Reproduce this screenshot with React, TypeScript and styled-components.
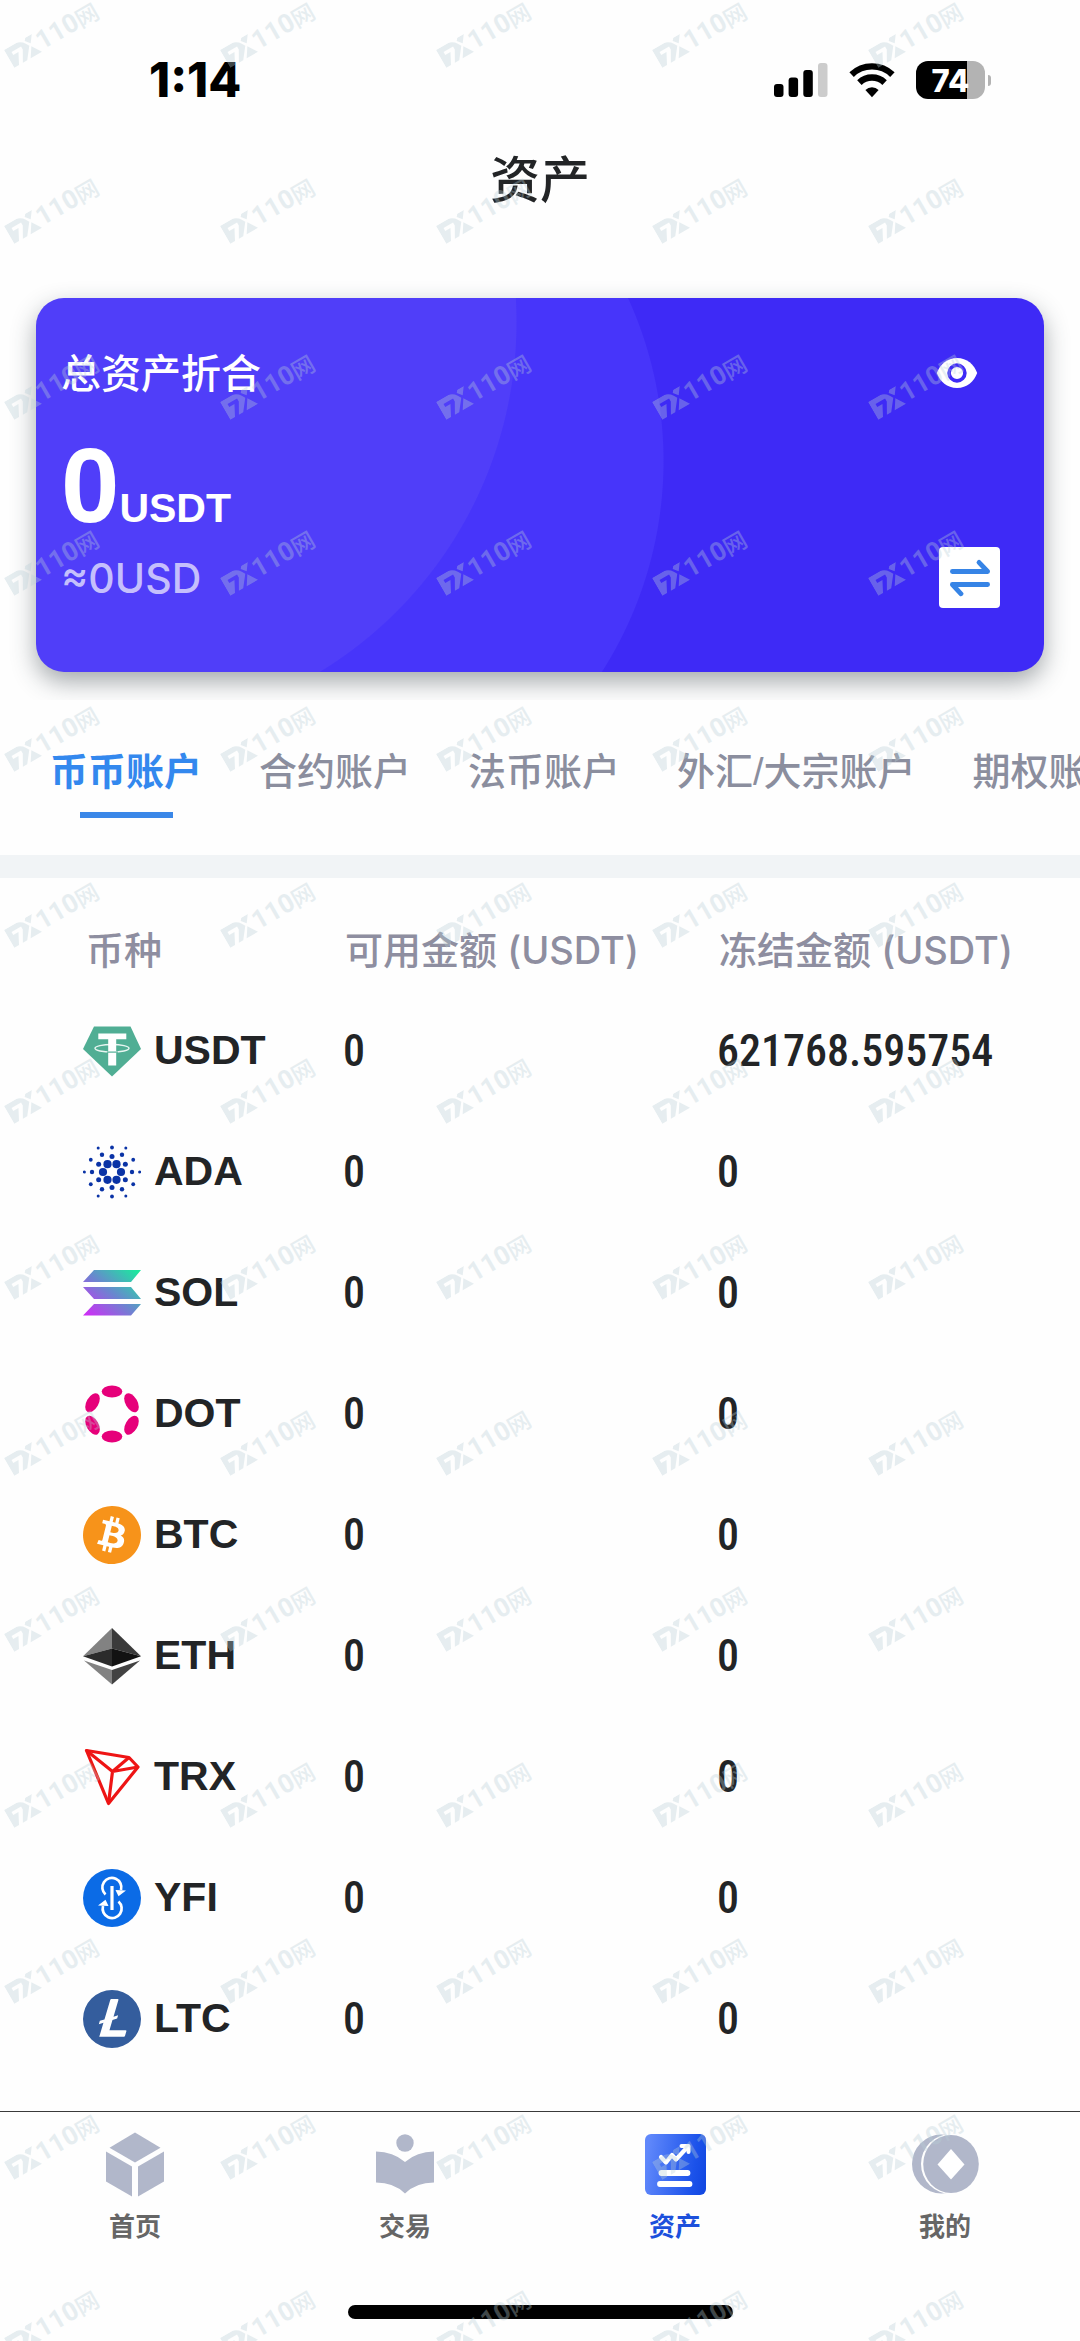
import React from "react";
import styled, { createGlobalStyle } from "styled-components";
import { SiBitcoin, SiLitecoin } from "react-icons/si";

const GlobalStyle = createGlobalStyle`
  *, *::before, *::after { box-sizing: border-box; }
  html, body { margin: 0; padding: 0; background: #fefefe; }
  body {
    font-family: Inter, "Noto Sans CJK SC", sans-serif;
    color: #222426;
    -webkit-font-smoothing: antialiased;
  }
  button { font: inherit; color: inherit; border: 0; padding: 0; background: none; cursor: pointer; }
`;

const Screen = styled.div`
  position: relative;
  display: flex;
  flex-direction: column;
  min-height: 100vh;
  overflow: hidden;
  background: #fefefe;
`;

const StatusBar = styled.header`
  display: flex;
  align-items: center;
  justify-content: space-between;
  padding: 60px 89px 0 149px;
`;

const Time = styled.time`
  font-size: 48px;
  font-weight: 800;
  line-height: 40px;
  color: #000;
`;

const StatusIcons = styled.div`
  display: flex;
  align-items: center;
  gap: 21px;
`;

const Battery = styled.div`
  display: flex;
  align-items: center;
  gap: 3px;
`;

const BatteryLevel = styled.span`
  display: flex;
  align-items: center;
  justify-content: center;
  width: 69px;
  height: 38px;
  border-radius: 12px;
  background: linear-gradient(to right, #000 74%, #b3b3b3 74%);
  color: #fff;
  font-size: 31px;
  font-weight: 800;
`;

const BatteryTip = styled.span`
  width: 3px;
  height: 11px;
  border-radius: 0 3px 3px 0;
  background: #b3b3b3;
`;

const Title = styled.h1`
  margin: 0;
  padding: 44px 0 82px;
  font-size: 50px;
  line-height: 72px;
  font-weight: 500;
  text-align: center;
`;

const Card = styled.section`
  display: flex;
  justify-content: space-between;
  margin: 0 36px;
  padding: 50px 41px 64px 25px;
  height: 374px;
  border-radius: 28px;
  color: #fff;
  background:
    radial-gradient(circle 410px at 71px 24px, #503ef9 409px, transparent 410px),
    radial-gradient(circle 392px at 236px 163px, #4735fa 391px, transparent 392px),
    #3e2af6;
  box-shadow: 0 10px 24px rgba(40, 52, 60, 0.42);
`;

const Balance = styled.div`
  display: flex;
  flex-direction: column;
`;

const BalanceLabel = styled.span`
  font-size: 40px;
  line-height: 52px;
  font-weight: 500;
`;

const Amount = styled.p`
  display: flex;
  align-items: baseline;
  margin: 32px 0 0;
  font-family: "Liberation Sans", Arial, sans-serif;
  font-size: 105px;
  line-height: 108px;
  font-weight: 700;
`;

const Unit = styled.span`
  font-size: 41px;
  line-height: 42px;
`;

const Approx = styled.span`
  margin-top: 12px;
  font-size: 41px;
  line-height: 52px;
  font-weight: 500;
  color: #c5bffc;
`;

const CardActions = styled.div`
  display: flex;
  flex-direction: column;
  align-items: center;
  justify-content: space-between;
`;

const EyeButton = styled.button`
  display: flex;
  margin-top: 10px;
  margin-right: 25px;
`;

const SwapButton = styled.button`
  display: flex;
  align-items: center;
  justify-content: center;
  width: 61px;
  height: 61px;
  border-radius: 4px;
  background: #fff;
`;

const Tabs = styled.nav`
  position: relative;
  display: flex;
  gap: 57px;
  margin-top: 28px;
  padding: 44px 0 37px 50px;
  overflow: hidden;
  background: #fefefe;
`;

const Tab = styled.button<{ $active?: boolean }>`
  display: flex;
  flex: none;
  flex-direction: column;
  align-items: center;
  gap: 12px;
  font-family: "Liberation Sans", "Noto Sans CJK SC", sans-serif;
  font-size: 38px;
  line-height: 56px;
  font-weight: ${(p) => (p.$active ? 700 : 500)};
  color: ${(p) => (p.$active ? "#3388ee" : "#8b8e9e")};

  &::after {
    content: "";
    width: 93px;
    height: 6px;
    background: ${(p) => (p.$active ? "#3a87e8" : "transparent")};
  }
`;

const Divider = styled.div`
  height: 23px;
  background: #f1f4f6;
`;

const ListArea = styled.main`
  flex: 1;
`;

const CoinTable = styled.table`
  width: 100%;
  border-collapse: collapse;
  table-layout: fixed;
`;

const NameCol = styled.col`
  width: 343px;
`;

const AvailableCol = styled.col`
  width: 374px;
`;

const Heading = styled.th<{ $first?: boolean }>`
  height: 112px;
  padding: 32px 0 0 ${(p) => (p.$first ? "86px" : "2px")};
  font-size: 38px;
  line-height: 52px;
  font-weight: 500;
  text-align: left;
  white-space: nowrap;
  color: #8e8ea0;
`;

const CoinCell = styled.th`
  height: 121px;
  padding: 0 0 0 83px;
  text-align: left;
`;

const Coin = styled.div`
  display: flex;
  align-items: center;
  gap: 13px;
  font-family: "Liberation Sans", Arial, sans-serif;
  font-size: 41px;
  font-weight: 700;

  svg { flex: none; }
`;

const Value = styled.td`
  padding: 0;
  font-family: "Liberation Sans Narrow", "Roboto Condensed", Roboto, sans-serif;
  font-size: 44px;
  font-weight: 500;
`;

const TabBar = styled.footer`
  border-top: 1px solid #3a3a3a;
  background: #fefefe;
`;

const TabBarItems = styled.nav`
  display: grid;
  grid-template-columns: repeat(4, 1fr);
`;

const TabBarItem = styled.a<{ $active?: boolean }>`
  display: flex;
  flex-direction: column;
  align-items: center;
  gap: 8px;
  padding-top: 19px;
  font-size: 26px;
  line-height: 40px;
  font-weight: 700;
  text-decoration: none;
  color: ${(p) => (p.$active ? "#1c50dc" : "#666")};
`;

const HomeIndicator = styled.div`
  width: 385px;
  height: 14px;
  margin: 58px auto 22px;
  border-radius: 7px;
  background: #000;
`;

const WatermarkLayer = styled.div`
  position: absolute;
  inset: 0;
  display: grid;
  grid-template-columns: repeat(auto-fill, 216px);
  grid-auto-rows: 176px;
  overflow: hidden;
  pointer-events: none;
  color: rgb(185, 207, 215);
  opacity: 0.34;
`;

const WatermarkCell = styled.div`
  padding: 50px 0 0 4px;
`;

const Mark = styled.div`
  display: flex;
  align-items: center;
  width: 110px;
  height: 21px;
  transform: rotate(-30deg);
  transform-origin: top left;
  font-family: Roboto, sans-serif;
  font-size: 26px;
  line-height: 21px;
  font-weight: 700;

  svg { flex: none; }
`;

const MarkSuffix = styled.span`
  font-family: "Noto Sans CJK SC", sans-serif;
  font-size: 23px;
  font-weight: 500;
`;

const SignalIcon = () => (
  <svg width="54" height="36" viewBox="0 0 54 36" aria-hidden="true">
    <rect x="0" y="22" width="9.5" height="13" rx="3" />
    <rect x="14.6" y="15.5" width="9.5" height="19.5" rx="3" />
    <rect x="29.3" y="8" width="9.5" height="27" rx="3" />
    <rect x="44" y="1" width="9.5" height="34" rx="3" fill="#ccc" />
  </svg>
);

const WifiIcon = () => (
  <svg width="46" height="36" viewBox="0 0 46 36" aria-hidden="true">
    <g fill="none" stroke="#000" strokeWidth="6.4">
      <path d="M2.6 12.6A29.5 29.5 0 0 1 43.4 12.6" />
      <path d="M10.4 20.6A18.2 18.2 0 0 1 35.6 20.6" />
    </g>
    <path d="M23 35.2l-6.6-7.2a9.6 9.6 0 0 1 13.2 0z" />
  </svg>
);

const EyeIcon = () => (
  <svg width="42" height="30" viewBox="0 0 42 30" aria-hidden="true">
    <path d="M21 0C11 0 4 6.5.8 15 4 23.5 11 30 21 30s17-6.5 20.2-15C38 6.5 31 0 21 0z" fill="#fff" />
    <circle cx="21" cy="15" r="7.9" fill="#fff" stroke="#3e2af6" strokeWidth="3.6" />
  </svg>
);

const SwapIcon = () => (
  <svg width="42" height="38" viewBox="0 0 42 38" fill="none" stroke="#3684e6" strokeWidth="4.8" strokeLinecap="round" strokeLinejoin="round" aria-hidden="true">
    <path d="M3.400 12.500H38.600L30 3.400" />
    <path d="M38.600 25.500H3.400L12 34.800" />
  </svg>
);

const UsdtIcon = () => (
  <svg width="58" height="58" viewBox="0 0 58 58" aria-hidden="true">
    <path d="M11 4.500H47.500L58 27 29 54.500 0 27z" fill="#50ae94" />
    <ellipse cx="29" cy="26.300" rx="17" ry="3.800" fill="none" stroke="#e8f5f1" strokeWidth="1.400" />
    <path d="M15.300 11.500H43.300V17.300H33.200V43.500H25.200V17.300H15.300z" fill="#fff" />
    <path d="M24 30.100H35" stroke="#50ae94" strokeWidth="1.200" />
  </svg>
);

const adaRings = [
  { distance: 9, radius: 4.1, start: 0 },
  { distance: 15.4, radius: 2.5, start: 30 },
  { distance: 20, radius: 2.2, start: 0 },
  { distance: 24.5, radius: 1.9, start: 30 },
  { distance: 27.6, radius: 1.5, start: 0 },
];

const AdaIcon = () => (
  <svg width="58" height="58" viewBox="0 0 58 58" fill="#0a33a6" aria-hidden="true">
    {adaRings.flatMap((ring) =>
      [0, 60, 120, 180, 240, 300].map((step) => {
        const angle = ((ring.start + step) * Math.PI) / 180;
        return (
          <circle
            key={`${ring.distance}-${step}`}
            cx={29 + ring.distance * Math.cos(angle)}
            cy={29 + ring.distance * Math.sin(angle)}
            r={ring.radius}
          />
        );
      })
    )}
  </svg>
);

const SolIcon = () => (
  <svg width="58" height="58" viewBox="0 0 58 58" aria-hidden="true">
    <defs>
      <linearGradient id="sol" gradientUnits="userSpaceOnUse" x1="8" y1="54" x2="50" y2="4">
        <stop offset="0" stopColor="#cc2ff5" />
        <stop offset="0.5" stopColor="#6a86cf" />
        <stop offset="1" stopColor="#1ce79f" />
      </linearGradient>
    </defs>
    <path d="M11 6H58L48 18H0zM0 23H48L58 35H11zM11 40H58L48 51.500H0z" fill="url(#sol)" />
  </svg>
);

const DotIcon = () => (
  <svg width="58" height="58" viewBox="0 0 58 58" fill="#e6007a" aria-hidden="true">
    {[0, 60, 120, 180, 240, 300].map((turn) => (
      <ellipse key={turn} cx="29" cy="6.500" rx="10.300" ry="6" transform={`rotate(${turn} 29 29)`} />
    ))}
  </svg>
);

const EthIcon = () => (
  <svg width="58" height="58" viewBox="0 0 58 58" aria-hidden="true">
    <path d="M29 1L0 29.200 29 21.500z" fill="#828282" />
    <path d="M29 1L58 29.200 29 21.500z" fill="#3b3b3b" />
    <path d="M0 29.200L29 21.500V39.500z" fill="#2c2c2c" />
    <path d="M58 29.200L29 21.500V39.500z" fill="#121212" />
    <path d="M1 33.500L29 43V57.500z" fill="#828282" />
    <path d="M57 33.500L29 43V57.500z" fill="#424242" />
  </svg>
);

const TrxIcon = () => (
  <svg width="58" height="58" viewBox="0 0 58 58" fill="none" stroke="#ee1414" strokeWidth="3.2" strokeLinejoin="round" aria-hidden="true">
    <path d="M3.500 2.500L46 9.500 55 19 25.500 55.500z" />
    <path d="M3.500 2.500L29.500 23.500 46 9.500M55 19L29.500 23.500 25.500 55.500" />
  </svg>
);

const YfiIcon = () => (
  <svg width="58" height="58" viewBox="0 0 58 58" aria-hidden="true">
    <circle cx="29" cy="29" r="29" fill="#0b6be6" />
    <g fill="none" stroke="#fff" strokeWidth="2.7">
      <path d="M22.500 25.500A9.500 9.500 0 1 1 38 21" />
      <path d="M35.500 32.500A9.500 9.500 0 1 1 20 37" />
      <path d="M29 17V41" strokeWidth="3.2" />
    </g>
    <path d="M43 21.500L35.500 27.300 32.500 21zM15 36.500L22.500 30.700 25.500 37z" fill="#fff" />
  </svg>
);

const HomeIcon = () => (
  <svg width="62" height="68" viewBox="0 0 62 68" fill="#b1b7ca" aria-hidden="true">
    <path d="M31 1.500L56.500 16.700 31 31.500 5.500 16.700z" />
    <path d="M2 20.500L28 35.500V65.500L2 50.500z" />
    <path d="M60 20.500L34 35.500V65.500L60 50.500z" />
  </svg>
);

const TradeIcon = () => (
  <svg width="62" height="68" viewBox="0 0 62 68" fill="#b1b7ca" aria-hidden="true">
    <circle cx="31" cy="12" r="8.700" />
    <path d="M2 20.500Q19 20.500 31 31 43 20.500 60 20.500V51.500Q42 51.500 31 62.500 20 51.500 2 51.500z" />
  </svg>
);

const AssetsIcon = () => (
  <svg width="62" height="68" viewBox="0 0 62 68" aria-hidden="true">
    <defs>
      <linearGradient id="assets" x1="0" y1="0.5" x2="1" y2="0.65">
        <stop offset="0" stopColor="#6088fb" />
        <stop offset="0.8" stopColor="#1b52ea" />
        <stop offset="1" stopColor="#1248e2" />
      </linearGradient>
    </defs>
    <rect x="1" y="3" width="61" height="61" rx="6" fill="url(#assets)" />
    <g fill="none" stroke="#fff" strokeLinecap="round" strokeLinejoin="round">
      <path d="M17 26L22 31.500 28 24 32 28.500 44 15.500" strokeWidth="4.2" />
      <path d="M37.500 15H44.500V21" strokeWidth="4" />
      <path d="M17.500 42H43.500M16 53H45.500" strokeWidth="5.8" />
    </g>
  </svg>
);

const MineIcon = () => (
  <svg width="70" height="68" viewBox="0 0 70 68" aria-hidden="true">
    <circle cx="31.500" cy="33" r="29.500" fill="#b1b7ca" />
    <ellipse cx="41" cy="33" rx="30" ry="30" fill="#fefefe" />
    <ellipse cx="41" cy="33" rx="27.800" ry="29" fill="#b1b7ca" />
    <path d="M41 18L54.500 33.500 41 48.500 27.500 33.500z" fill="#fff" />
  </svg>
);

const MarkLogo = () => (
  <svg width="33" height="21" viewBox="0 0 33 21" fill="currentColor" aria-hidden="true">
    <path fillRule="evenodd" d="M0 0H14Q19 1 22 5.500L24 9 15 20.500H10L16.500 9V5.500H5.500V9H11.500L5.500 20.500H0z" />
    <path d="M32 0L26.500 7.500 22.500 2.500 24.500 0zM25.500 10.500L32 20.500H19z" />
  </svg>
);

const coins = [
  { name: "USDT", icon: <UsdtIcon />, available: "0", frozen: "621768.595754" },
  { name: "ADA", icon: <AdaIcon />, available: "0", frozen: "0" },
  { name: "SOL", icon: <SolIcon />, available: "0", frozen: "0" },
  { name: "DOT", icon: <DotIcon />, available: "0", frozen: "0" },
  { name: "BTC", icon: <SiBitcoin size={58} color="#f7931a" />, available: "0", frozen: "0" },
  { name: "ETH", icon: <EthIcon />, available: "0", frozen: "0" },
  { name: "TRX", icon: <TrxIcon />, available: "0", frozen: "0" },
  { name: "YFI", icon: <YfiIcon />, available: "0", frozen: "0" },
  { name: "LTC", icon: <SiLitecoin size={58} color="#345d9d" />, available: "0", frozen: "0" },
];

const accounts = ["币币账户", "合约账户", "法币账户", "外汇/大宗账户", "期权账户"];

const pages = [
  { label: "首页", icon: <HomeIcon /> },
  { label: "交易", icon: <TradeIcon /> },
  { label: "资产", icon: <AssetsIcon /> },
  { label: "我的", icon: <MineIcon /> },
];

const Watermark = () => (
  <WatermarkLayer aria-hidden="true">
    {Array.from({ length: 70 }, (_, i) => (
      <WatermarkCell key={i}>
        <Mark>
          <MarkLogo />
          110<MarkSuffix>网</MarkSuffix>
        </Mark>
      </WatermarkCell>
    ))}
  </WatermarkLayer>
);

export default function App() {
  return (
    <Screen>
      <GlobalStyle />
      <StatusBar>
        <Time>1:14</Time>
        <StatusIcons>
          <SignalIcon />
          <WifiIcon />
          <Battery>
            <BatteryLevel>74</BatteryLevel>
            <BatteryTip />
          </Battery>
        </StatusIcons>
      </StatusBar>
      <Title>资产</Title>
      <Card>
        <Balance>
          <BalanceLabel>总资产折合</BalanceLabel>
          <Amount>
            0<Unit>USDT</Unit>
          </Amount>
          <Approx>≈0USD</Approx>
        </Balance>
        <CardActions>
          <EyeButton aria-label="隐藏金额">
            <EyeIcon />
          </EyeButton>
          <SwapButton aria-label="划转">
            <SwapIcon />
          </SwapButton>
        </CardActions>
      </Card>
      <Tabs>
        {accounts.map((account, i) => (
          <Tab key={account} $active={i === 0}>
            {account}
          </Tab>
        ))}
      </Tabs>
      <Divider />
      <ListArea>
        <CoinTable>
          <colgroup>
            <NameCol />
            <AvailableCol />
            <col />
          </colgroup>
          <thead>
            <tr>
              <Heading scope="col" $first>币种</Heading>
              <Heading scope="col">可用金额 (USDT)</Heading>
              <Heading scope="col">冻结金额 (USDT)</Heading>
            </tr>
          </thead>
          <tbody>
            {coins.map((coin) => (
              <tr key={coin.name}>
                <CoinCell scope="row">
                  <Coin>
                    {coin.icon}
                    {coin.name}
                  </Coin>
                </CoinCell>
                <Value>{coin.available}</Value>
                <Value>{coin.frozen}</Value>
              </tr>
            ))}
          </tbody>
        </CoinTable>
      </ListArea>
      <TabBar>
        <TabBarItems>
          {pages.map((page) => (
            <TabBarItem key={page.label} href="#" $active={page.label === "资产"}>
              {page.icon}
              {page.label}
            </TabBarItem>
          ))}
        </TabBarItems>
        <HomeIndicator />
      </TabBar>
      <Watermark />
    </Screen>
  );
}
